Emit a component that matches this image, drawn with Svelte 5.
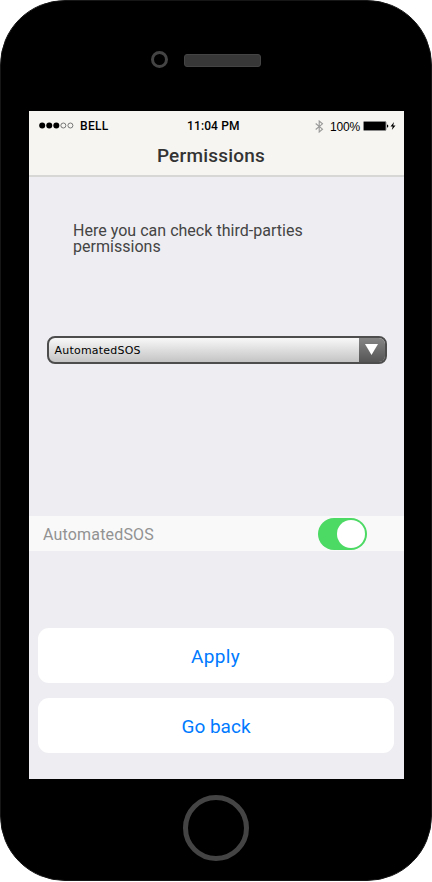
<script>
  let enabled = $state(true);
  const signal = [true, true, true, false, false];
</script>

<div class="phone">
  <div class="top">
    <div class="camera"></div>
    <div class="speaker"></div>
  </div>

  <main class="screen">
    <header>
      <div class="status">
        <div class="carrier">
          <svg width="36" height="8" viewBox="0 0 36 8">
            {#each signal as on, i}
              <circle cx={3.2 + i * 7.05} cy="3.5" r={on ? 3 : 2.5} fill={on ? '#000' : 'none'} stroke={on ? 'none' : '#777'} />
            {/each}
          </svg>
          <span class="bell">BELL</span>
        </div>
        <span class="time">11:04 PM</span>
        <div class="power">
          <svg class="bt" width="9" height="13" viewBox="0 0 9 13" fill="none" stroke="#999" stroke-width="1.1">
            <path d="M.7 3.5 7.5 9.2 4.2 12V1L7.5 3.8.7 9.5" />
          </svg>
          <span class="pct">100%</span>
          <svg class="batt" width="33" height="11" viewBox="0 0 33 11">
            <rect x=".5" y=".5" width="22.5" height="9" rx="1" fill="#000" stroke="#888" />
            <path d="M24 3.5q1.3 0 1.3 1.5T24 6.5z" fill="#000" />
            <path d="M31 1 27.5 5.5h2.2L28.8 9 32.5 4.5h-2.3z" fill="#000" />
          </svg>
        </div>
      </div>
      <h1>Permissions</h1>
    </header>

    <p>Here you can check third-parties<br />permissions</p>

    <div class="select" role="button" tabindex="0">
      <span class="value">AutomatedSOS</span>
      <span class="arrow">
        <svg width="13" height="11" viewBox="0 0 13 11"><path d="M0 0h13L6.5 11z" fill="#fff" /></svg>
      </span>
    </div>

    <div class="row">
      <span>AutomatedSOS</span>
      <button class="toggle" class:on={enabled} aria-label="AutomatedSOS" onclick={() => (enabled = !enabled)}><i></i></button>
    </div>

    <div class="actions">
      <button class="apply">Apply</button>
      <button>Go back</button>
    </div>
  </main>

  <div class="home"></div>
</div>

<style>
  :global(body) { background: #fff; }
  .phone {
    box-sizing: border-box;
    width: 432px;
    height: 881px;
    background: #000;
    border: 1px solid #161616;
    border-radius: 65px;
    padding: 0 27px 0 28px;
    display: flex;
    flex-direction: column;
    font-family: Roboto, "Liberation Sans", sans-serif;
  }
  .top {
    height: 110px;
    flex: none;
    box-sizing: border-box;
    padding: 50px 0 0 122px;
    display: flex;
    gap: 16px;
  }
  .camera {
    box-sizing: border-box;
    width: 17px;
    height: 17px;
    border: 3px solid #444;
    border-radius: 50%;
  }
  .speaker {
    box-sizing: border-box;
    margin-top: 3px;
    width: 77px;
    height: 13px;
    background: #373737;
    border: 1px solid #444;
    border-radius: 3px;
  }
  .screen {
    width: 375px;
    height: 668px;
    flex: none;
    background: #eeedf2;
    display: flex;
    flex-direction: column;
  }
  header {
    height: 66px;
    box-sizing: border-box;
    background: #f6f5f1;
    border-bottom: 2px solid #d7d7d5;
  }
  .status {
    height: 30px;
    box-sizing: border-box;
    padding: 0 8px 0 10px;
    display: grid;
    grid-template-columns: 148px auto 1fr;
    align-items: center;
    font-size: 12px;
    font-weight: 500;
    line-height: 14px;
    color: #000;
  }
  .carrier, .power { display: flex; align-items: center; }
  .carrier { gap: 5px; }
  .bell { letter-spacing: .3px; }
  .time { letter-spacing: .12px; }
  .power { justify-content: flex-end; }
  .bt { margin-right: 5px; }
  .pct { font: 12px/14px "Liberation Sans", sans-serif; margin: 1px 3px 0 1px; letter-spacing: -.2px; }
  h1 {
    margin: 3px 0 0;
    padding-right: 11px;
    text-align: center;
    font-size: 19px;
    line-height: 24px;
    font-weight: 500;
    letter-spacing: .22px;
    color: #333;
  }
  p {
    margin: 46px 0 0 44px;
    font-size: 16px;
    line-height: 16px;
    letter-spacing: .02px;
    color: #444;
  }
  .select {
    box-sizing: border-box;
    width: 340px;
    height: 28px;
    margin: 81px 0 0 18px;
    border: 2px solid #4d4d4d;
    border-radius: 8px;
    overflow: hidden;
    display: flex;
    background: linear-gradient(#f8f8f8, #c4c4c4);
  }
  .value {
    flex: 1;
    padding: 1px 0 0 5.5px;
    font: 11px/24px "DejaVu Sans", sans-serif;
    letter-spacing: .22px;
    color: #000;
  }
  .arrow {
    width: 26px;
    box-sizing: border-box;
    padding: 0 1px 2px 0;
    display: flex;
    align-items: center;
    justify-content: center;
    background: linear-gradient(#858585, #555);
  }
  .row {
    height: 35px;
    margin-top: 152px;
    padding: 0 37px 0 14px;
    display: flex;
    align-items: center;
    justify-content: space-between;
    background: #f9f9f9;
    color: #929292;
    font-size: 16px;
    letter-spacing: .17px;
  }
  .row span { padding-top: 2px; }
  .toggle {
    width: 49px;
    height: 32px;
    padding: 2px;
    border: 0;
    border-radius: 16px;
    background: #ccc;
    display: flex;
  }
  .toggle.on { background: #4cd964; justify-content: flex-end; }
  .toggle i { width: 28px; height: 28px; border-radius: 50%; background: #fff; }
  .actions {
    margin: 77px 10px 0 9px;
    display: flex;
    flex-direction: column;
    gap: 15px;
  }
  .actions button {
    height: 55px;
    border: 0;
    padding: 2px 0 0;
    border-radius: 11px;
    background: #fff;
    color: #007aff;
    font: 19px/24px Roboto, "Liberation Sans", sans-serif;
  }
  .actions .apply { letter-spacing: .3px; padding-right: 1px; }
  .home {
    box-sizing: border-box;
    width: 66px;
    height: 66px;
    flex: none;
    margin: 16px 0 0 154px;
    border: 5px solid #444;
    border-radius: 50%;
  }
</style>
